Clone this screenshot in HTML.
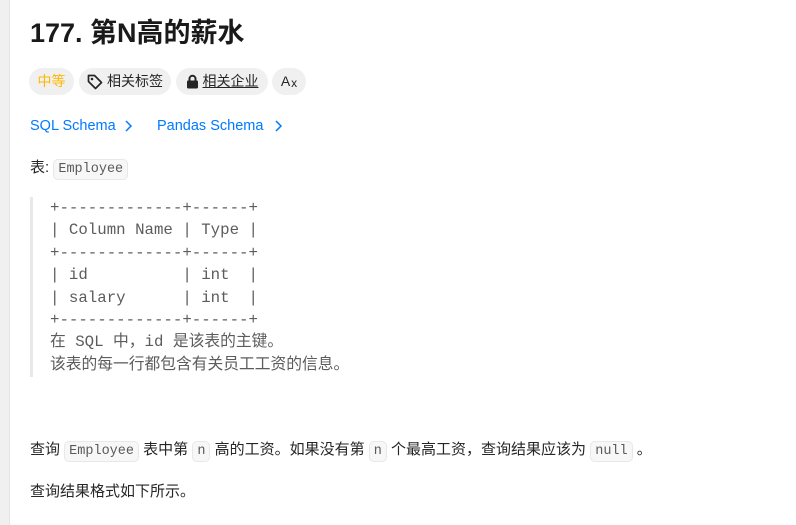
<!DOCTYPE html>
<html><head><meta charset="utf-8"><style>
*{margin:0;padding:0;box-sizing:border-box}
body{width:796px;height:525px;background:#fff;position:relative;overflow:hidden;font-family:"Liberation Sans","Noto Sans CJK SC",sans-serif;color:#262626}
.bar{position:absolute;left:0;top:0;width:10px;height:525px;background:#f0f0f0;border-right:1px solid #e6e6e6}
.a{position:absolute;white-space:nowrap}
.t{left:30px;top:15px;font-size:27px;font-weight:bold;color:#1a1a1a;line-height:36px}
.pill{position:absolute;top:68px;height:27px;border-radius:14px;background:#f0f0f0;font-size:14px;line-height:27px;display:flex;align-items:center;justify-content:center;gap:4px;color:#262626}
.lk{top:116px;font-size:14.5px;color:#007aff;line-height:20px}
.code{font-family:"Liberation Mono",monospace;font-size:13.5px;background:#f7f7f7;border:1px solid #e8e8e8;border-radius:5px;padding:2px 4px;color:#5a5a5a}
.p{font-size:15px;line-height:22px;left:30px}
.pre{position:absolute;left:30px;top:197px;width:3px;height:180px;background:#e8e8e8}
.pt{left:50px;top:197px;font-family:"Liberation Mono","Noto Sans CJK SC",monospace;font-size:15.75px;line-height:22.4px;color:#5c5c5c;white-space:pre}
</style></head><body>
<div class="bar"></div>
<div class="a t">177. 第N高的薪水</div>
<div class="pill" style="left:29px;width:45px;color:#ffb800">中等</div>
<div class="pill" style="left:79px;width:92px"><svg width="16" height="16" viewBox="0 0 16 16"><path d="M1.5 1.5h6l7 7-6 6-7-7z" fill="none" stroke="#262626" stroke-width="1.7" stroke-linejoin="round"/><circle cx="5" cy="5" r="1.3" fill="#262626"/></svg>相关标签</div>
<div class="pill" style="left:176px;width:92px"><svg width="13" height="15" viewBox="0 0 13 15"><path d="M3.5 7V4.8a3 3 0 0 1 6 0V7" fill="none" stroke="#262626" stroke-width="2"/><rect x="1" y="6.5" width="11" height="8" rx="1.2" fill="#262626"/></svg><span style="text-decoration:underline">相关企业</span></div>
<div class="pill" style="left:272px;width:34px;font-size:14px">A<span style="font-size:12px;margin-left:-3px;margin-top:3px">x</span></div>
<div class="a lk" style="left:30px">SQL Schema</div>
<svg class="a" style="left:124px;top:119px" width="9" height="14" viewBox="0 0 9 14"><path d="M2 2l5 5-5 5" fill="none" stroke="#007aff" stroke-width="1.5"/></svg>
<div class="a lk" style="left:157px">Pandas Schema</div>
<svg class="a" style="left:274px;top:119px" width="9" height="14" viewBox="0 0 9 14"><path d="M2 2l5 5-5 5" fill="none" stroke="#007aff" stroke-width="1.5"/></svg>
<div class="a p" style="top:157px">表: <span class="code">Employee</span></div>
<div class="pre"></div>
<div class="a pt">+-------------+------+
| Column Name | Type |
+-------------+------+
| id          | int  |
| salary      | int  |
+-------------+------+
在 SQL 中，id 是该表的主键。
该表的每一行都包含有关员工工资的信息。</div>
<div class="a p" style="top:439px">查询 <span class="code">Employee</span> 表中第 <span class="code">n</span> 高的工资。如果没有第 <span class="code">n</span> 个最高工资，查询结果应该为 <span class="code">null</span> 。</div>
<div class="a p" style="top:481px">查询结果格式如下所示。</div>
</body></html>
